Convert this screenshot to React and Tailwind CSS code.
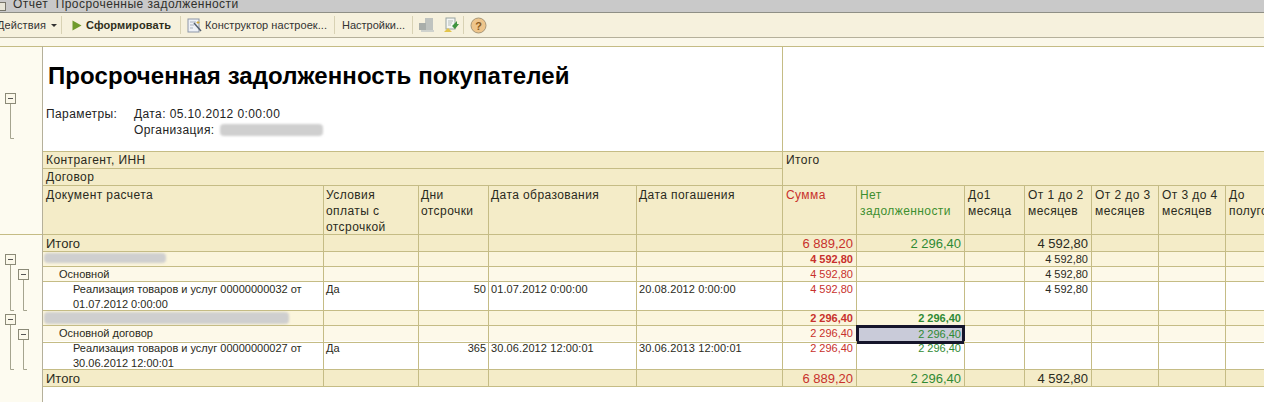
import React from "react";

const cols =
  "grid grid-cols-[281px_95px_70px_148px_146px_74px_108px_60px_67px_67px_67px_67px_39px]";
const cell = "border-r border-b border-[#c5bc85] px-[2px] overflow-hidden";
const wideCell = "border-r border-b border-[#c5bc85] px-[3px] overflow-hidden";

const Sep = ({ className = "" }) => (
  <div className={"w-px h-[18px] bg-[#d8d2b4] " + className}></div>
);

const Smudge = ({ className }) => (
  <div className={"bg-[#cfcfcf] blur-[1px] rounded-sm " + className}></div>
);

const Toolbar = () => (
  <div className="h-[25px] bg-[#f6f1dd] border-b border-[#b5b09a] flex items-center text-[11px] text-[#333333] overflow-hidden">
    <span className="ml-[-3px] tracking-[0.1px]">Действия</span>
    <span className="ml-[5px] w-0 h-0 border-x-[3px] border-x-transparent border-t-[3px] border-t-[#333333]"></span>
    <Sep className="ml-[4px]" />
    <svg className="ml-[10px]" width="10" height="11" viewBox="0 0 10 11">
      <path d="M0.5 0.5 L9.5 5.5 L0.5 10.5 Z" fill="#6f9a2c" />
    </svg>
    <span className="ml-[4px] w-[87px] font-bold tracking-[0.1px] text-[#2f2f1c] whitespace-nowrap">Сформировать</span>
    <Sep className="ml-[7px]" />
    <svg className="ml-[6px]" width="15" height="15" viewBox="0 0 15 15">
      <rect x="1" y="1" width="11" height="13" fill="#eef1f6" stroke="#8d97a8" />
      <path d="M3 4h6M3 7h4M3 10h3" stroke="#aab2c0" />
      <path d="M7 5 L14 13" stroke="#55606e" strokeWidth="1.5" />
      <path d="M11 3v3M9.5 4.5h3" stroke="#d0a93c" />
    </svg>
    <span className="ml-[3px] w-[124px] tracking-[0.05px] whitespace-nowrap">Конструктор настроек...</span>
    <Sep className="ml-[5px]" />
    <span className="ml-[7px] w-[65px] whitespace-nowrap">Настройки...</span>
    <Sep className="ml-[5px]" />
    <svg className="ml-[6px]" width="16" height="16" viewBox="0 0 16 16">
      <rect x="6" y="1" width="8" height="12" fill="#bfc3bf" />
      <path d="M0 6h7v7H0Z" fill="#a9aeaa" />
      <rect x="2" y="13" width="13" height="2" fill="#cfd2cd" />
    </svg>
    <svg className="ml-[8px]" width="16" height="16" viewBox="0 0 16 16">
      <rect x="3" y="1" width="9" height="11" fill="#f4f6f4" stroke="#98a3a0" />
      <path d="M5 4h5M5 6h4M5 8h3" stroke="#b5bdb9" />
      <path d="M9 9l5-5v3l2 0-4 5Z" fill="#3f9440" />
      <path d="M1 15l4-4 4 4Z" fill="#e2c44b" />
    </svg>
    <Sep className="ml-[4px]" />
    <svg className="ml-[6px]" width="17" height="17" viewBox="0 0 17 17">
      <circle cx="8.5" cy="8.5" r="7.5" fill="#eec58b" stroke="#a89778" />
      <text x="8.5" y="12.5" textAnchor="middle" fontSize="11" fontWeight="bold" fill="#8a5a1e" fontFamily="Liberation Sans, sans-serif">?</text>
    </svg>
  </div>
);

// outline tree in the left gutter
const Minus = ({ x, y }) => (
  <g>
    <rect x={x + 0.5} y={y + 0.5} width="10" height="10" fill="#fbf8ea" stroke="#8b8a78" />
    <path d={`M${x + 3} ${y + 5.5}h5`} stroke="#555555" />
  </g>
);

const Gutter = () => (
  <div className="w-[43px] shrink-0 bg-[#fdfbf0] border-r border-[#b5b09a]">
    <svg width="42" height="356" viewBox="0 46 42 356">
      <path d="M0 46.5H42M0 234.5H42" stroke="#c5bc85" />
      <path d="M10.5 104V138.5H14" fill="none" stroke="#a5a48f" />
      <path d="M10.5 264V310.5H14" fill="none" stroke="#a5a48f" />
      <path d="M23.5 280V310.5H27" fill="none" stroke="#a5a48f" />
      <path d="M10.5 323V369.5H14" fill="none" stroke="#a5a48f" />
      <path d="M23.5 338V369.5H27" fill="none" stroke="#a5a48f" />
      <Minus x={5} y={93} />
      <Minus x={5} y={254} />
      <Minus x={18} y={269} />
      <Minus x={5} y={314} />
      <Minus x={18} y={329} />
    </svg>
  </div>
);

const Report = () => (
  <div className="border-t border-[#c5bc85] h-[106px] flex">
    <div className="w-[740px] shrink-0 border-r border-b border-[#c5bc85] bg-white pl-[5px] pt-[14px]">
      <h1 className="text-[24px] leading-[30px] font-bold tracking-[0.08px] text-black whitespace-nowrap">
        Просроченная задолженность покупателей
      </h1>
      <div className="mt-[15px] ml-[-2px] text-[12px] leading-[16px] tracking-[0.4px] text-[#222222] flex">
        <span className="w-[88px]">Параметры:</span>
        <div>
          <div>Дата: 05.10.2012 0:00:00</div>
          <div className="flex items-center gap-[5px]">
            Организация:
            <Smudge className="w-[103px] h-[12px]" />
          </div>
        </div>
      </div>
    </div>
    <div className="flex-1 border-b border-[#c5bc85] bg-white"></div>
  </div>
);

const headers = [
  { t: "Условия оплаты с отсрочкой", p: cell },
  { t: "Дни отсрочки", p: cell },
  { t: "Дата образования", p: cell },
  { t: "Дата погашения", p: cell },
  { t: "Сумма", p: wideCell, c: "text-[#c8312c]" },
  { t: "Нет задолженности", p: wideCell, c: "text-[#3d8f2f]" },
  { t: "До1 месяца", p: wideCell },
  { t: "От 1 до 2 месяцев", p: wideCell },
  { t: "От 2 до 3 месяцев", p: wideCell },
  { t: "От 3 до 4 месяцев", p: wideCell },
  { t: "До полугодия", p: wideCell },
];

const Head = () => (
  <div className={cols + " grid-rows-[17px_17px_49px] bg-[#f4ecc8] text-[12px] leading-[16px] tracking-[0.42px] text-[#2a2a20]"}>
    <div className={wideCell + " col-span-5"}>Контрагент, ИНН</div>
    <div className={wideCell + " col-span-8 row-span-2"}>Итого</div>
    <div className={wideCell + " col-span-5"}>Договор</div>
    <div className={wideCell + " pt-px"}>Документ расчета</div>
    {headers.map((h) => (
      <div key={h.t} className={h.p + " pt-px " + (h.c || "")}>
        {h.t}
      </div>
    ))}
  </div>
);

const red = "text-[#c8312c]";
const green = "text-[#2f8a34]";

// one row: first col, amounts, and row styling
const Row = ({ h, bg, size, first, cond, days, from, to, sum, ok, m2, sel }) => (
  <div className={cols + " " + h + " " + bg + " " + size + " text-[#2a2a20]"}>
    <div className={wideCell}>{first}</div>
    <div className={cell}>{cond}</div>
    <div className={cell + " text-right"}>{days}</div>
    <div className={cell + " tracking-[0.1px]"}>{from}</div>
    <div className={cell + " tracking-[0.1px]"}>{to}</div>
    <div className={wideCell + " text-right " + red}>{sum}</div>
    {sel ? (
      <div className={"border-[3px] border-[#15152b] bg-[#c9cbd9] text-right pr-px mb-[-1px] ml-[-1px] mt-[-1px] leading-[13px] " + green}>
        {ok}
      </div>
    ) : (
      <div className={wideCell + " text-right " + green}>{ok}</div>
    )}
    <div className={cell}></div>
    <div className={wideCell + " text-right"}>{m2}</div>
    <div className={cell}></div>
    <div className={cell}></div>
    <div className={cell}></div>
    <div className={cell}></div>
  </div>
);

const big = "text-[13px] leading-[18px]";
const small = "text-[11px] leading-[15px]";
const bold = "text-[11px] leading-[14px] font-bold";

const App = () => {
  return (
    <div className="w-[1264px] h-[402px] overflow-hidden bg-white font-['Liberation_Sans',Arial,sans-serif]">
      <div className="h-[13px] bg-[#c9c9c9] border-b border-[#8f8f86] flex items-center overflow-hidden">
        <div className="w-[6px] h-[9px] bg-[#e8e6d8] border border-[#77756a] border-l-0"></div>
        <span className="ml-[7px] text-[12px] tracking-[0.45px] text-[#30302c] whitespace-pre -mt-[5px]">
          Отчет  Просроченные задолженности
        </span>
      </div>
      <Toolbar />
      <div className="h-[8px] bg-[#fbf8ea]"></div>
      <div className="flex h-[356px]">
        <Gutter />
        <div className="flex-1 min-w-0 overflow-hidden">
          <Report />
          <Head />
          <Row h="h-[17px]" bg="bg-[#f4ecc8]" size={big} first="Итого" sum="6 889,20" ok="2 296,40" m2="4 592,80" />
          <Row
            h="h-[15px]"
            bg="bg-[#fbf5dc]"
            size={bold}
            first={<Smudge className="w-[122px] h-[10px] mt-[1px] ml-[-2px]" />}
            sum="4 592,80"
            m2={<span className="font-normal">4 592,80</span>}
          />
          <Row h="h-[15px]" bg="bg-[#fdf9e9]" size={small} first={<span className="pl-[13px]">Основной</span>} sum="4 592,80" m2="4 592,80" />
          <Row
            h="h-[29px]"
            bg="bg-white"
            size={small}
            first={<div className="pl-[27px]">Реализация товаров и услуг 00000000032 от 01.07.2012 0:00:00</div>}
            cond="Да"
            days="50"
            from="01.07.2012 0:00:00"
            to="20.08.2012 0:00:00"
            sum="4 592,80"
            m2="4 592,80"
          />
          <Row
            h="h-[15px]"
            bg="bg-[#fbf5dc]"
            size={bold}
            first={<Smudge className="w-[245px] h-[12px] mt-[1px] ml-[-2px]" />}
            sum="2 296,40"
            ok="2 296,40"
          />
          <Row h="h-[15px]" bg="bg-[#fdf9e9]" size={small} first={<span className="pl-[13px]">Основной договор</span>} sum="2 296,40" ok="2 296,40" sel />
          <Row
            h="h-[29px]"
            bg="bg-white"
            size={small}
            first={<div className="pl-[27px]">Реализация товаров и услуг 00000000027 от 30.06.2012 12:00:01</div>}
            cond="Да"
            days="365"
            from="30.06.2012 12:00:01"
            to="30.06.2013 12:00:01"
            sum="2 296,40"
            ok="2 296,40"
          />
          <Row h="h-[17px]" bg="bg-[#f4ecc8]" size={big} first="Итого" sum="6 889,20" ok="2 296,40" m2="4 592,80" />
        </div>
      </div>
    </div>
  );
};

export default App;
